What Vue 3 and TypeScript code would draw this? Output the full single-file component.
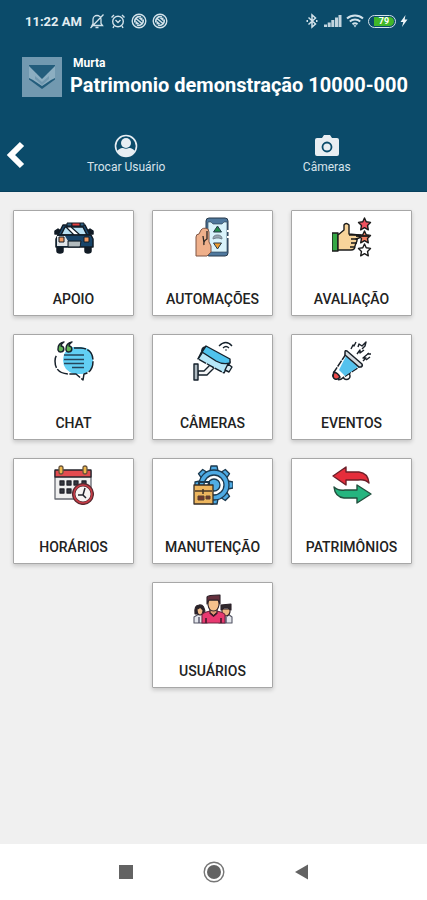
<script setup lang="ts">
type IconName =
  | 'car' | 'phone' | 'rating' | 'chat' | 'camera'
  | 'horn' | 'calendar' | 'gear' | 'arrows' | 'people'

interface Tile {
  icon: IconName
  label: string
}

const tiles: Tile[] = [
  { icon: 'car', label: 'APOIO' },
  { icon: 'phone', label: 'AUTOMAÇÕES' },
  { icon: 'rating', label: 'AVALIAÇÃO' },
  { icon: 'chat', label: 'CHAT' },
  { icon: 'camera', label: 'CÂMERAS' },
  { icon: 'horn', label: 'EVENTOS' },
  { icon: 'calendar', label: 'HORÁRIOS' },
  { icon: 'gear', label: 'MANUTENÇÃO' },
  { icon: 'arrows', label: 'PATRIMÔNIOS' },
  { icon: 'people', label: 'USUÁRIOS' },
]

const teeth: number[] = [0, 45, 90, 135, 180, 225, 270, 315]
const starRows: { y: number; fill: string }[] = [
  { y: 7, fill: '#f0525f' },
  { y: 20, fill: '#ef7f62' },
  { y: 33, fill: '#ffffff' },
]
</script>

<template>
  <div class="screen">
    <header class="top">
      <div class="status">
        <div class="status-group">
          <span class="clock">11:22 AM</span>
          <svg class="s-icon" viewBox="0 0 16 16" fill="none" stroke="#d3e2ea" stroke-width="1.3">
            <path d="M3 12.5h10.5l-1.500-2V6.500a4 4 0 0 0-8 0v4zM6.500 14.500h3M1.500 15 14.500 1.500" />
          </svg>
          <svg class="s-icon" viewBox="0 0 16 16" fill="none" stroke="#d3e2ea" stroke-width="1.400">
            <circle cx="8" cy="8.500" r="5.300" /><path d="M5.500 7 8 9.500 10.500 7M1.500 4.500 4 2M14.500 4.500 12 2M4 13l-1 2M12 13l1 2" />
          </svg>
          <svg v-for="n in 2" :key="n" class="s-icon" viewBox="0 0 16 16" fill="none" stroke="#d3e2ea">
            <circle cx="8" cy="8" r="6.800" stroke-width="1.400" />
            <path d="M4 9.500a4.500 4.500 0 0 1 6-5.500M12 6.500a4.500 4.500 0 0 1-6 5.500M4.500 5l7 6" stroke-width="1.600" />
            <path d="M7.500 5l4-.5v4zM8.500 11l-4 .5v-4z" fill="#d3e2ea" stroke="none" />
          </svg>
        </div>
        <div class="status-group right">
          <svg class="s-icon" viewBox="0 0 16 16" fill="none" stroke="#d3e2ea" stroke-width="1.500">
            <path d="M4.500 4.500l7 6.500L8 14V2l3.500 3-7 6.500" /><path d="M2.500 8h1.500M12 8h1.500" stroke-width="2" />
          </svg>
          <svg class="signal" viewBox="0 0 18 14" fill="#c3d5df">
            <path d="M0 10.500h3V13H0zM3.700 8.500h3V13h-3zM7.300 6h3v7h-3zM11 3.500h3V13h-3zM14.500 1H17.500v12h-3z" />
          </svg>
          <svg class="wifi" viewBox="0 0 18 14" fill="none" stroke="#d3e2ea" stroke-width="2">
            <path d="M1 4.500a12 12 0 0 1 16 0M3.800 7.500a8 8 0 0 1 10.400 0M6.500 10.200a4 4 0 0 1 5 0" /><path d="M7.500 11.300h3L9 13.500z" fill="#d3e2ea" stroke="none" />
          </svg>
          <span class="battery"><span class="charge">79</span></span>
          <svg class="bolt" viewBox="0 0 8 14" fill="#eef5f8"><path d="M5.500 1 .5 8h2.800L2 13l5.500-7.500H4.700z" /></svg>
        </div>
      </div>

      <div class="identity">
        <svg class="logo" viewBox="0 0 40 40">
          <rect width="40" height="40" fill="#7299b0" />
          <path d="M7 8h26v14.500L20 32 7 22.500z" fill="#235d7c" />
          <path d="M7 9l7 7 6 6 6-6 7-7v12l-4 2-9 6-9-6-4-2z" fill="#8caec1" />
          <path d="M13 19l7 6 7-6v3l-7 6-7-6z" fill="#7299b0" />
        </svg>
        <div class="names">
          <span class="owner">Murta</span>
          <h1>Patrimonio demonstração 10000-000</h1>
        </div>
      </div>

      <nav class="actions">
        <button class="back" type="button" aria-label="Voltar">
          <svg viewBox="0 0 20 28" fill="none" stroke="#fff" stroke-width="6"><path d="M16 3 5 14l11 11" /></svg>
        </button>
        <button class="action" type="button">
          <svg viewBox="0 0 24 24">
            <circle cx="12" cy="12" r="10.500" fill="none" stroke="#e7eef3" stroke-width="1.600" />
            <circle cx="12" cy="9" r="5" fill="#e7eef3" />
            <path d="M3 17c2-2.500 5-3 6-3 2 1 4 1 6 0 1 0 4 .5 6 3a10.300 10.300 0 0 1-18 0z" fill="#e7eef3" />
          </svg>
          <span>Trocar Usuário</span>
        </button>
        <button class="action" type="button">
          <svg viewBox="0 0 24 24">
            <path d="M2 4h5l2-3h6l2 3h5q2 0 2 2v14q0 2-2 2H2q-2 0-2-2V6q0-2 2-2z" fill="#e9eef2" />
            <circle cx="12" cy="13" r="4.500" fill="none" stroke="#0b4b6a" stroke-width="1.800" />
          </svg>
          <span>Câmeras</span>
        </button>
      </nav>
    </header>

    <main class="grid">
      <button v-for="t in tiles" :key="t.icon" class="tile" type="button">
        <svg class="tile-icon" viewBox="0 0 40 40" stroke-linejoin="round">
          <g v-if="t.icon === 'car'" stroke="#111b25" stroke-width="1.500">
            <path d="M3 28h6v6q0 2-3 2t-3-2zM31 28h6v6q0 2-3 2t-3-2z" fill="#111b25" />
            <path d="M1 14l3-2 3 2-3 3H1zM39 14l-3-2-3 2 3 3h3z" fill="#111b25" />
            <path d="M9 8h22l5 10H4z" fill="#1c4d72" />
            <path d="M11 10h18l4 8H7z" fill="#b9e1f3" />
            <path d="M12 10h5l9 8h-6z" fill="#fff" stroke-width="1.200" />
            <path d="M4 18h33l2 4v8H2v-8z" fill="#174469" />
            <path d="M3 19h8l3 5v5H3v-7z" fill="#e1e5e8" stroke="none" />
            <path d="M14 24h13l-1 6H14z" fill="#929ea3" stroke-width="1" />
            <path d="M15 26h11M15 28h11" stroke="#d2d8d9" stroke-width="1" />
            <path d="M5 20h5v5H5zM30 20h5v5h-5z" fill="#ef975e" stroke-width="1" />
            <path d="M13 6h5v3h-5zM26 6h4v3h-4z" fill="#326487" stroke-width="1" />
            <path d="M18 6h8v3h-8z" fill="#e33e3e" stroke-width="1" />
          </g>

          <g v-else-if="t.icon === 'phone'" stroke="#26394a" stroke-width="1">
            <rect x="13" y="1" width="22" height="38" rx="3" fill="#4f789d" />
            <path d="M15 5h3l2 2h9l2-2h3v30H15z" fill="#d9f3fb" stroke-width=".6" />
            <path d="M35 13v9" stroke="#fff" stroke-width="2" stroke-dasharray="2 4" />
            <path d="M24.500 9l4 6h-8z" fill="#248f4c" /><path d="M20.500 26h8l-4 6z" fill="#ef9e2f" />
            <path d="M20 22q0-4 4.500-4t4.500 4l-3-1h-3z" fill="#98a8b2" stroke="#71818d" />
            <path d="M3 39V20q0-3 3-3l2-4q2-3 7-1l1 3v10l2 4v6l-4 4z" fill="#efb08b" stroke="#7f5544" />
            <path d="M10 19l1 7M14 14v8q-4 2-3 6" fill="none" stroke="#2c2725" stroke-width="1.300" />
          </g>

          <g v-else-if="t.icon === 'rating'" stroke="#1b1b1b" stroke-width="1.400">
            <path d="M0 16h6v18H0z" fill="#35a845" />
            <path d="M6 18l6-5V8q2-3 5 0v9l10 1q3 2 0 3l-3 1q2 1 0 4l-1 3q0 4-4 4H6z" fill="#f8d49a" />
            <path d="M17 18h12M19 22h7M19 26h6M18 30h5" fill="none" stroke-width="1.300" />
            <path
              v-for="s in starRows" :key="s.y" :fill="s.fill"
              :transform="`translate(32.500 ${s.y})`"
              d="M0-6l1.700 3.800 4.300.6-3 3 .8 4.400L0 3.700l-3.800 2.100.8-4.400-3-3 4.300-.6z"
            />
            <path d="M24 19h13" stroke-width="1.800" />
          </g>

          <g v-else-if="t.icon === 'chat'" fill="none" stroke="#17202a" stroke-width="1.500">
            <path d="M19 6h8q12 1 12 13T28 33H20Q9 29 9 19T19 6z" fill="#62cff4" stroke="none" />
            <path d="M20 7h7q12 1 12 13 0 11-9 13l-1 6-7-6h-8Q1 32 1 20q0-4 2-6" stroke-dasharray="12 1.500" />
            <path d="M10 14h20M10 18.500h20M10 22.500h20M18 26.500h12" stroke="#26455b" stroke-width="1.400" />
            <path d="M10 1Q4 2 4 8v1a3 3 0 1 0 3-4q0-2 3-4zM18 1q-6 1-6 7v1a3 3 0 1 0 3-4q0-2 3-4z" fill="#63b657" stroke-width="1.400" />
          </g>

          <g v-else-if="t.icon === 'camera'" stroke="#15212b" stroke-width="1.400">
            <path d="M5 30h6l6-6 4 3-7 7H5z" fill="#f4f5f6" />
            <path d="M1 23h4v16H1z" fill="#aeb9c0" />
            <path d="M10 8l27 13-6 11L5 18z" fill="#b5e7f8" stroke-dasharray="8 1" />
            <path d="M13 5l24 13v4q-7 2-14-2L9 11z" fill="#4fc3ed" />
            <path d="M12 6q-4 1-3 6l-4 6" fill="none" />
            <path d="M35 23l4 3-3 5-4-2z" fill="#dceef5" />
            <path d="M26 5q7-7 13 0M30 7q3-3 6 0" fill="none" stroke-width="1.300" />
            <circle cx="33" cy="9" r=".8" fill="#15212b" stroke="none" />
          </g>

          <g v-else-if="t.icon === 'horn'" stroke="#1a2129" stroke-width="1.500">
            <circle cx="14.500" cy="35" r="3.500" fill="#fff" />
            <path d="M14 13L2 31q-3 5 2 7 4 2 8-2l15-10z" fill="#fff" stroke-dasharray="7 1" />
            <path d="M14 15l12 11-13 9-6-6z" fill="#55c2ee" stroke="none" />
            <path d="M2 31q4 1 6 5-2 3-5 2t-1-7z" fill="#ef4c4c" />
            <path d="M13 11q0-2 2-1l15 13q1 2-1 3h-2L13 14z" fill="#d6dbdf" />
            <path d="M19 8l2-4 1 1 2-4M26 6l1-3 3 2 4-4-1 4-3 3M25 13l3-4v3l4-3M31 20l3-3h-3l6-5M34 19l4-3M35 13h4" fill="none" stroke-width="1.400" />
          </g>

          <g v-else-if="t.icon === 'calendar'" stroke="#24252d" stroke-width="1.300">
            <path d="M1 6h36v28H1z" fill="#efefef" stroke="#656870" /><path d="M1 5h36v7H1z" fill="#e34b50" />
            <path d="M5 3q0-2 2-2t2 2v4q0 2-2 2T5 7zM29 3q0-2 2-2t2 2v4q0 2-2 2t-2-2z" fill="#eeb84b" stroke="#68543b" />
            <path d="M6 16h4v4H6zM13 16h4v4h-4zM20 16h4v4h-4zM28 16h4v4h-4zM6 24h4v4H6zM13 24h4v4h-4z" fill="#34373f" />
            <circle cx="29" cy="29" r="9.300" fill="#f8f4f3" stroke="#582b32" stroke-width="3.500" />
            <circle cx="29" cy="29" r="9" fill="none" stroke="#c83b45" stroke-width="1.600" />
            <path d="M31 23l-2 7h-5M29 30l3 3" fill="none" stroke-width="1.500" />
          </g>

          <g v-else-if="t.icon === 'gear'" stroke="#1c394e" stroke-width="1.300">
            <path v-for="a in teeth" :key="a" :transform="`rotate(${a} 21 20)`" d="M17 6l1-5h6l1 5z" fill="#4eaae3" />
            <circle cx="21" cy="20" r="15" fill="#4eaae3" />
            <circle cx="21" cy="20" r="10" fill="#fff" />
            <circle cx="21" cy="20" r="6" fill="#51aee5" />
            <path d="M6 21v-4h10v4" fill="none" stroke-width="2" />
            <path d="M1 20h19v19H1z" fill="#edb65f" stroke="#362e27" />
            <path d="M2 26h17M6 26h9M10 24v5" stroke="#463628" stroke-width="1.500" />
            <path d="M5 31h6v4H5zM13 31h4v3h-4z" fill="#70382d" stroke="#594032" stroke-width="1" />
          </g>

          <g v-else-if="t.icon === 'arrows'" stroke-width="1.400">
            <path d="M1 11L14 2v5h13q9 1 10 11-4-4-11-3H14v5z" fill="#e52d3b" stroke="#6c1f29" />
            <path d="M39 29L25 38v-5H12Q3 32 2 22q4 4 11 3h12v-5z" fill="#25b57f" stroke="#22503e" />
          </g>

          <g v-else stroke="#2b2028" stroke-width="1.100">
            <path d="M1 34v-6l5-3h5l3 3v6zM26 34v-6l5-3h4l4 3v6z" fill="#e3e5eb" stroke="#555766" />
            <path d="M2 25q-1-9 4-9 6-1 6 9z" fill="#272428" />
            <path d="M4 20q2 0 3-2l3 3q0 5-3 5t-3-6z" fill="#f1bd8a" />
            <path d="M29 20h8v3q-1 4-4 4t-4-4z" fill="#edb783" />
            <path d="M28 21v-5l10-1v6l-3-2h-4z" fill="#30292c" />
            <path d="M9 34v-8q0-2 8-4h7q8 2 8 4v8z" fill="#e83970" stroke="#71243e" />
            <path d="M17 20h7v4l-3.500 3-3.500-3z" fill="#d99872" />
            <path d="M15 11h11v5q-1 6-5.500 6T15 16z" fill="#f5c08c" />
            <path d="M14 15V8q1-2 12-2h1v9l-2-4h-9z" fill="#642f3d" />
            <path d="M17 24l3.500 3 3.500-3M13 29v5M28 29v5" fill="none" stroke="#3b1727" stroke-width="1.500" />
            <path d="M6 28v6M33 28v6" stroke="#4a4961" stroke-width="1.300" />
          </g>
        </svg>
        <span class="label">{{ t.label }}</span>
      </button>
    </main>

    <nav class="system">
      <button type="button" aria-label="Recentes"><svg viewBox="0 0 22 22"><path d="M4 4h14v14H4z" fill="#636363" /></svg></button>
      <button type="button" aria-label="Início">
        <svg viewBox="0 0 22 22"><circle cx="11" cy="11" r="9.800" fill="none" stroke="#777" stroke-width="1.400" /><circle cx="11" cy="11" r="7" fill="#636363" /></svg>
      </button>
      <button type="button" aria-label="Anterior"><svg viewBox="0 0 22 22"><path d="M17 3.500v15L4 11z" fill="#636363" /></svg></button>
    </nav>
  </div>
</template>

<style>
body {
  margin: 0;
}
</style>

<style scoped>
.screen {
  display: flex;
  flex-direction: column;
  min-height: 100vh;
  background: #f0f0f0;
  font-family: Roboto, "Liberation Sans", sans-serif;
}

button {
  margin: 0;
  padding: 0;
  border: 0;
  background: none;
  font: inherit;
  cursor: pointer;
}

svg {
  display: block;
  flex: none;
}

.top {
  box-sizing: border-box;
  min-height: 192px;
  padding-top: 12px;
  background: #0b4b6a;
  border-bottom: 1px solid #07405d;
  color: #fff;
}

.status {
  display: flex;
  justify-content: space-between;
  align-items: center;
  height: 18px;
  padding: 0 19px 0 25px;
}

.status-group {
  display: flex;
  align-items: center;
  gap: 5px;
}

.right {
  gap: 4px;
}

.clock {
  margin-right: 2px;
  color: #e3edf2;
  font-size: 13px;
  font-weight: 700;
}

.s-icon {
  width: 16px;
  height: 16px;
}

.signal,
.wifi {
  width: 18px;
  height: 14px;
}

.battery {
  box-sizing: border-box;
  display: flex;
  justify-content: flex-end;
  width: 28px;
  height: 13px;
  padding: 1px;
  border: 1px solid #d3e2ea;
  border-radius: 7px;
}

.charge {
  width: 20px;
  border-radius: 0 5px 5px 0;
  background: #41b728;
  font-size: 9px;
  font-weight: 700;
  line-height: 9px;
  text-align: center;
}

.bolt {
  width: 8px;
  height: 14px;
}

.identity {
  display: flex;
  align-items: center;
  gap: 8px;
  padding: 25px 16px 0 22px;
}

.logo {
  width: 40px;
  height: 40px;
}

.names {
  display: flex;
  flex-direction: column;
}

.owner {
  padding-left: 3px;
  font-size: 12px;
  font-weight: 700;
  line-height: 16px;
}

h1 {
  margin: 0;
  font-size: 20px;
  font-weight: 700;
  line-height: 28px;
  white-space: nowrap;
}

.actions {
  display: grid;
  grid-template-columns: 26px 1fr 1fr;
  align-items: center;
  padding-top: 35px;
}

.back svg {
  width: 20px;
  height: 28px;
  margin-left: 6px;
}

.action {
  display: flex;
  flex-direction: column;
  align-items: center;
  gap: 1px;
  color: #d7e3ea;
  font-size: 12px;
  line-height: 16px;
}

.action svg {
  width: 24px;
  height: 24px;
}

.grid {
  display: grid;
  grid-template-columns: repeat(3, 1fr);
  grid-auto-rows: 106px;
  gap: 18px;
  flex: 1;
  align-content: start;
  padding: 18px 15px 18px 13px;
}

.tile {
  display: flex;
  flex-direction: column;
  justify-content: space-between;
  align-items: center;
  padding: 6px 0 7px;
  border: 1px solid #a7a7a7;
  border-radius: 1px;
  background: #fff;
  box-shadow: 0 2px 4px rgb(0 0 0 / 18%);
  color: #222;
}

.tile:last-child {
  grid-column: 2;
}

.tile-icon {
  width: 40px;
  height: 40px;
}

.label {
  font-size: 14px;
  font-weight: 500;
  line-height: 18px;
}

.system {
  display: flex;
  justify-content: center;
  align-items: center;
  gap: 66px;
  height: 56px;
  background: #fff;
}

.system svg {
  width: 22px;
  height: 22px;
}
</style>
